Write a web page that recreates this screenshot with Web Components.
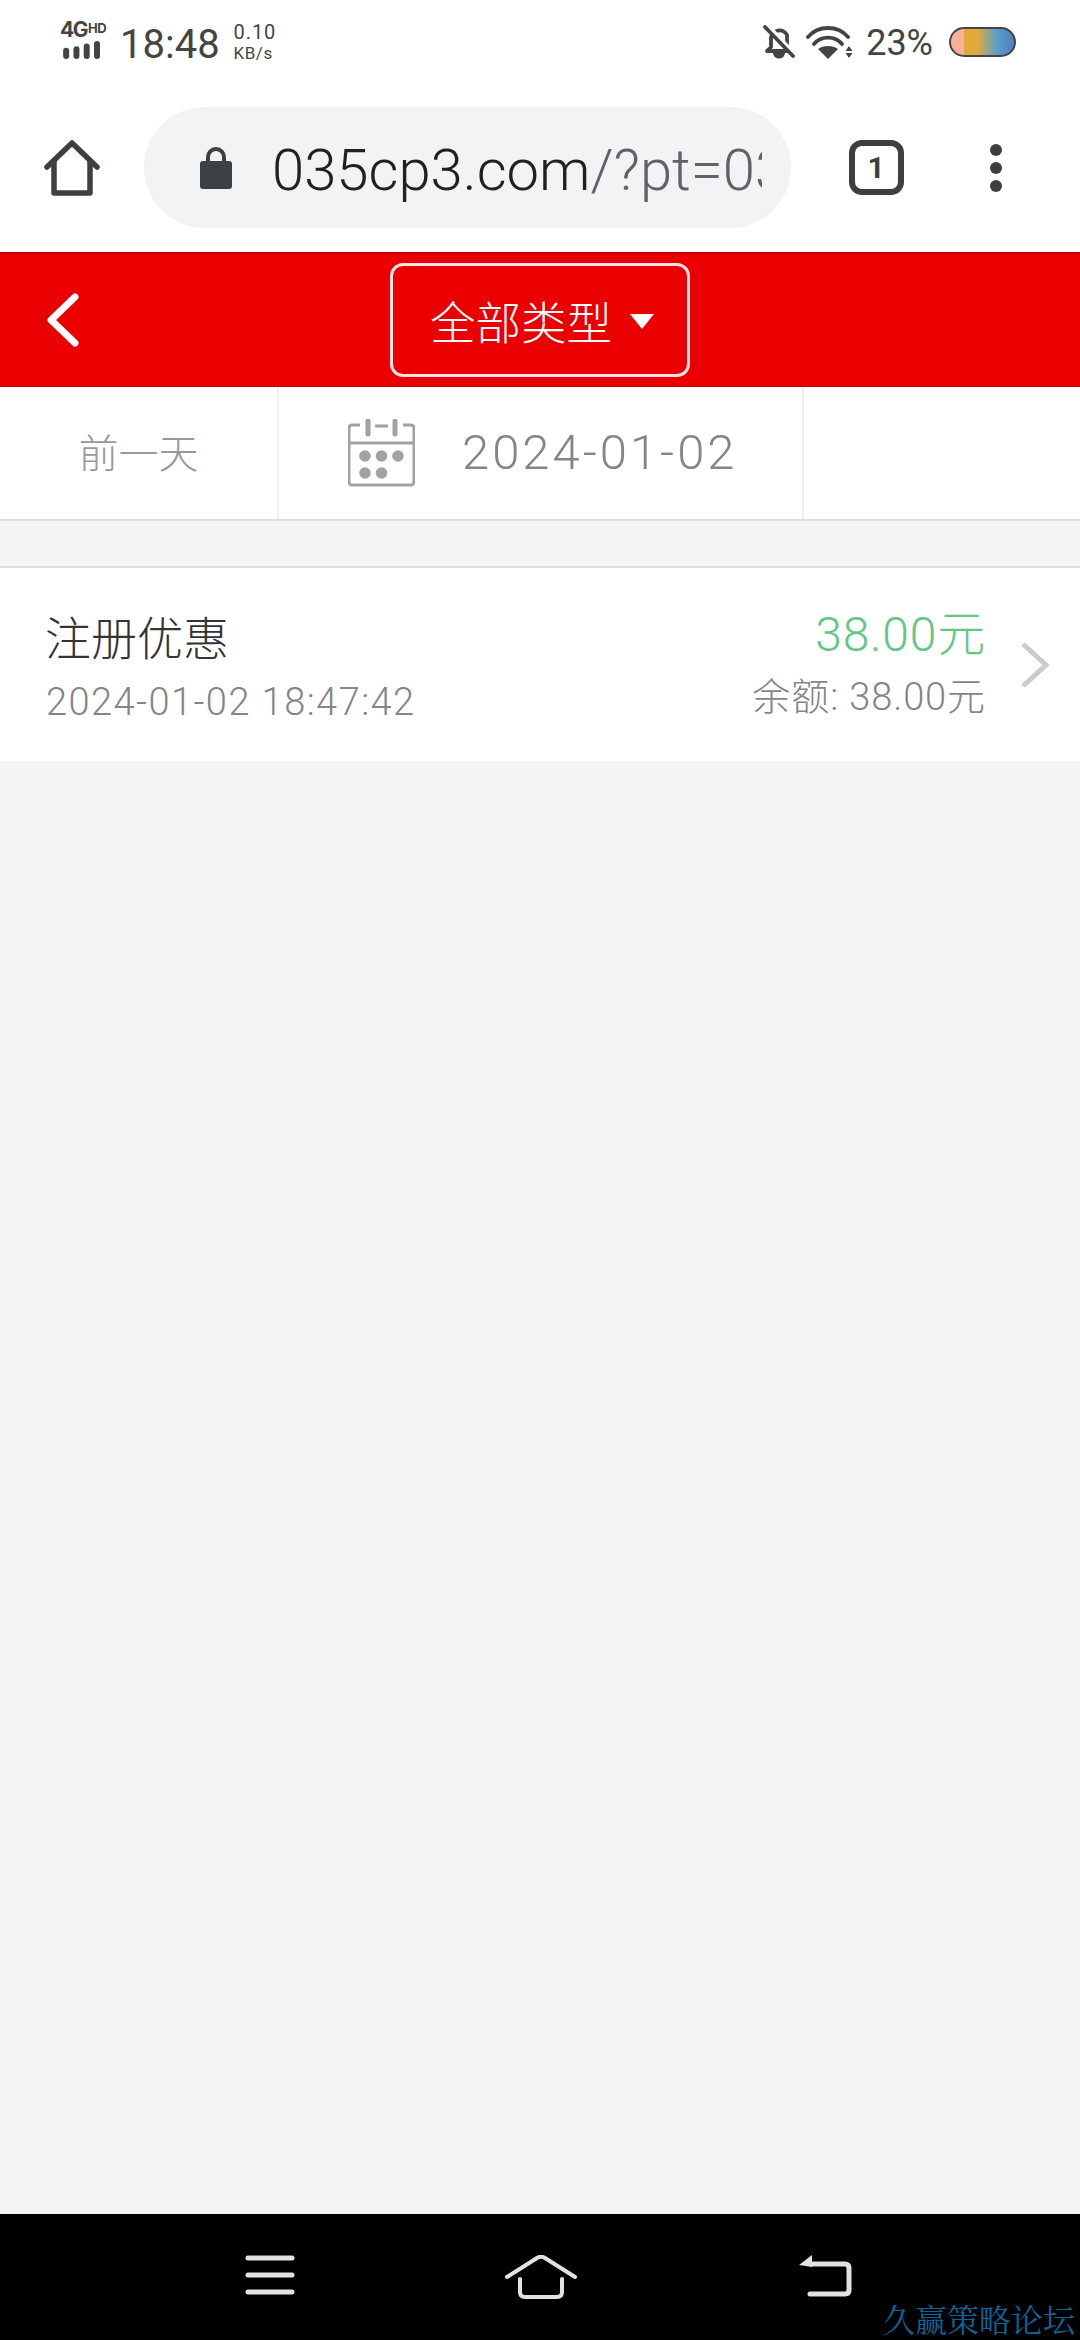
<!DOCTYPE html>
<html lang="zh">
<head>
<meta charset="utf-8">
<title>账变记录</title>
<style>
  html, body { margin: 0; height: 100%; }
  body { font-family: Roboto, "Noto Sans CJK SC", sans-serif; background: #f4f4f5; }
  app-page { height: 2340px; }
</style>
</head>
<body>
<app-page>
  <status-bar></status-bar>
  <browser-toolbar></browser-toolbar>
  <red-header>全部类型</red-header>
  <date-bar date="2024-01-02">前一天</date-bar>
  <record-item title="注册优惠" time="2024-01-02 18:47:42" amount="38.00元" balance="余额: 38.00元"></record-item>
  <nav-bar></nav-bar>
</app-page>

<script>
class AppPage extends HTMLElement {
  constructor() {
    super();
    this.attachShadow({ mode: 'open' }).innerHTML = `
      <style>
        :host { display: flex; flex-direction: column; background: #f4f4f5; }
        .content { display: contents; }
      </style>
      <div class="content"><slot></slot></div>
    `;
  }
}

class StatusBar extends HTMLElement {
  constructor() {
    super();
    this.attachShadow({ mode: 'open' }).innerHTML = `
      <style>
        :host { display: flex; height: 88px; background: #fff; color: #444; padding: 0 64px 0 60px; justify-content: space-between; align-items: flex-start; box-sizing: border-box; }
        .left, .right { display: flex; align-items: center; height: 84px; }
        .net { width: 44px; height: 38px; margin-top: -4px; display: flex; flex-direction: column; }
        .net b { font: 700 21px/17px Inter, sans-serif; letter-spacing: -1.5px; white-space: nowrap; }
        .net b i { font: 700 13px/13px Inter, sans-serif; font-style: normal; letter-spacing: -0.5px; vertical-align: 4px; margin-left: 1px; }
        .net svg { display: block; margin-top: 3px; }
        .time { font: 400 40px/44px Roboto, sans-serif; margin: 5px 0 0 16px; color: #444; }
        .speed { margin: 2px 0 0 14px; font: 400 20px/21px Roboto, sans-serif; letter-spacing: 0.9px; display: flex; flex-direction: column; }
        .speed span + span { font-size: 17px; letter-spacing: 0.5px; }
        .bell { margin-right: 11px; display: block; }
        .wifi { margin-right: 12px; display: block; }
        .pct { font: 400 36px/40px Roboto, sans-serif; margin-right: 16px; margin-top: 2px; }
        .batt { width: 67px; height: 30px; box-sizing: border-box; border: 2.5px solid #444; border-radius: 15px; background: linear-gradient(90deg, #f9b29a 0 20%, #e4a93c 20% 42%, #5a9fcb 72%, #4d7fc0 100%); }
      </style>
      <div class="left">
        <div class="net">
          <b>4G<i>HD</i></b>
          <svg width="44" height="21" viewBox="0 0 44 21" fill="#444">
            <rect x="0" y="8" width="7" height="13" rx="3.500"/>
            <rect x="12" y="6" width="7" height="15" rx="3.500"/>
            <rect x="24" y="3" width="7" height="18" rx="3.500"/>
            <rect x="36" y="0" width="7" height="21" rx="3.500"/>
          </svg>
        </div>
        <span class="time">18:48</span>
        <div class="speed"><span>0.10</span><span>KB/s</span></div>
      </div>
      <div class="right">
        <svg class="bell" width="32" height="34" viewBox="0 0 32 34">
          <path d="M4 26 l4-4 v-9 a8.500 8.500 0 0 1 16 -3 v12 l4 4 z" fill="none" stroke="#444" stroke-width="3.800" stroke-linejoin="round"/>
          <path d="M10 28 a6 5.500 0 0 0 12 0 z" fill="#444"/>
          <path d="M4 1 L31 30" stroke="#fff" stroke-width="6"/>
          <path d="M2 2 L30 31" stroke="#444" stroke-width="3.800" stroke-linecap="round"/>
        </svg>
        <svg class="wifi" width="48" height="34" viewBox="0 0 48 34" fill="none" stroke="#444" stroke-width="3.800" stroke-linecap="round">
          <path d="M2 12 C12 0 32 0 42 12"/>
          <path d="M8 19 C15 10.500 29 10.500 36 19"/>
          <path d="M22 34 L12 24 C17 20 27 20 32 24 Z" fill="#444" stroke="none"/>
          <path d="M43 21 l3.500 5 h-7 z M43 33 l-3.500 -5 h7 z" fill="#444" stroke="none"/>
        </svg>
        <span class="pct">23%</span>
        <div class="batt"></div>
      </div>
    `;
  }
}

class BrowserToolbar extends HTMLElement {
  constructor() {
    super();
    this.attachShadow({ mode: 'open' }).innerHTML = `
      <style>
        :host { display: grid; grid-template-columns: 144px 647px 170px 1fr; height: 164px; background: #fff; box-sizing: border-box; padding-top: 19px; }
        .cell { height: 121px; display: flex; align-items: center; justify-content: center; }
        .pill { justify-content: flex-start; background: #f1f3f4; border-radius: 61px; padding-left: 56px; box-sizing: border-box; }
        .url { margin: 4px 0 0 40px; width: 490px; overflow: hidden; white-space: nowrap; font: 300 58px/70px Roboto, sans-serif; color: #202124; }
        .url span { color: #5f6368; }
        .tab-box { width: 55px; height: 55px; box-sizing: border-box; border: 6px solid #3c4043; border-radius: 13px; display: flex; align-items: center; justify-content: center; font: 700 30px/1 Roboto, sans-serif; color: #3c4043; }
        .dots { padding-right: 49px; }
      </style>
      <div class="cell">
        <svg width="56" height="56" viewBox="0 0 56 56" fill="none" stroke="#3c4043" stroke-width="5.500" stroke-linejoin="round" stroke-linecap="round">
          <path d="M3 27 L28 3 L53 27"/>
          <path d="M10 21 V53 H46 V21"/>
        </svg>
      </div>
      <div class="cell pill">
        <svg width="32" height="43" viewBox="0 0 32 43" fill="#3c4043">
          <path d="M0 18 a3 3 0 0 1 3-3 h26 a3 3 0 0 1 3 3 v22 a3 3 0 0 1 -3 3 h-26 a3 3 0 0 1 -3-3 z"/>
          <path d="M8 16 v-5 a8 8 0 0 1 16 0 v5" fill="none" stroke="#3c4043" stroke-width="4"/>
        </svg>
        <div class="url">035cp3.com<span>/?pt=03</span></div>
      </div>
      <div class="cell"><div class="tab-box">1</div></div>
      <div class="cell dots">
        <svg width="12" height="48" viewBox="0 0 12 48" fill="#3c4043">
          <circle cx="6" cy="6" r="6"/><circle cx="6" cy="24" r="6"/><circle cx="6" cy="42" r="6"/>
        </svg>
      </div>
    `;
  }
}

class RedHeader extends HTMLElement {
  constructor() {
    super();
    this.attachShadow({ mode: 'open' }).innerHTML = `
      <style>
        :host { display: grid; grid-template-columns: 1fr auto 1fr; align-items: center; height: 135px; box-sizing: border-box; background: #ea0000; border-top: 2px solid #c70000; border-bottom: 1px solid #c70000; color: #fff; }
        .back { padding-left: 46px; display: flex; }
        .select { width: 300px; height: 114px; box-sizing: border-box; border: 3px solid #fbe3e3; border-radius: 13px; display: flex; align-items: center; padding-left: 37px; font: 300 45.5px/60px "Noto Sans CJK SC", sans-serif; gap: 18px; }
        .arrow { width: 0; height: 0; border-left: 12px solid transparent; border-right: 12px solid transparent; border-top: 15px solid #fff; margin-top: 2px; }
      </style>
      <div class="back">
        <svg width="34" height="54" viewBox="0 0 34 54" fill="none" stroke="#fff" stroke-width="7" stroke-linecap="round" stroke-linejoin="round">
          <path d="M29 4 L5 27 L29 50"/>
        </svg>
      </div>
      <div class="select"><slot></slot><span class="arrow"></span></div>
      <div></div>
    `;
  }
}

class DateBar extends HTMLElement {
  constructor() {
    super();
    this.attachShadow({ mode: 'open' }).innerHTML = `
      <style>
        :host { display: grid; grid-template-columns: 277px 525px 1fr; height: 134px; box-sizing: border-box; background: #fff; border-bottom: 2px solid #dcdcdc; }
        .cell { display: flex; align-items: center; box-sizing: border-box; }
        .cell + .cell { border-left: 2px solid #f0f0f0; }
        .prev { justify-content: center; font: 300 40px/50px "Noto Sans CJK SC", sans-serif; color: #999; padding-bottom: 4px; }
        .mid { padding-left: 69px; }
        .date { margin-left: 47px; font: 300 49px/60px Roboto, sans-serif; letter-spacing: 3px; color: #858585; }
      </style>
      <div class="cell prev"><slot></slot></div>
      <div class="cell mid">
        <svg width="67" height="68" viewBox="0 0 67 68" fill="none" stroke="#a2a2a2">
          <path d="M12 6 H4 a3 3 0 0 0 -3 3 V63 a3 3 0 0 0 3 3 H63 a3 3 0 0 0 3-3 V9 a3 3 0 0 0 -3-3 H55 M27 7 H40" stroke-width="3"/>
          <path d="M1 24 H66" stroke-width="3"/>
          <path d="M20 2 V15 M47 2 V15" stroke-width="5" stroke-linecap="round"/>
          <g fill="#a2a2a2" stroke="none">
            <circle cx="17" cy="37" r="5.800"/><circle cx="33.500" cy="37" r="5.800"/><circle cx="50" cy="37" r="5.800"/>
            <circle cx="17" cy="54" r="5.800"/><circle cx="33.500" cy="54" r="5.800"/>
          </g>
        </svg>
        <span class="date"></span>
      </div>
      <div class="cell"></div>
    `;
  }
  connectedCallback() {
    this.shadowRoot.querySelector('.date').textContent = this.getAttribute('date') || '';
  }
}

class RecordItem extends HTMLElement {
  constructor() {
    super();
    this.attachShadow({ mode: 'open' }).innerHTML = `
      <style>
        :host { display: flex; align-items: center; height: 195px; margin-top: 45px; box-sizing: border-box; background: #fff; border-top: 2px solid #dcdcdc; padding: 0 29px 0 45px; }
        .info { flex: 1; display: flex; flex-direction: column; gap: 14px; margin-top: 2px; }
        .title { font: 300 46px/58px "Noto Sans CJK SC", sans-serif; color: #333; }
        .time { font: 300 38px/48px Roboto, sans-serif; letter-spacing: 1.45px; color: #858585; padding-left: 1px; }
        .money { display: flex; flex-direction: column; align-items: flex-end; gap: 8px; margin-right: 33px; margin-top: -4px; }
        .amount { font: 300 48px/60px Roboto, "Noto Sans CJK SC", sans-serif; letter-spacing: 0.8px; color: #5fc883; }
        .balance { font: 300 38px/48px Roboto, "Noto Sans CJK SC", sans-serif; letter-spacing: 0.9px; color: #858585; }
        svg { display: block; }
      </style>
      <div class="info"><div class="title"></div><div class="time"></div></div>
      <div class="money"><div class="amount"></div><div class="balance"></div></div>
      <svg width="32" height="46" viewBox="0 0 32 46" fill="none" stroke="#cbcbcb" stroke-width="5"><path d="M4 2 L27 23 L4 44"/></svg>
    `;
  }
  connectedCallback() {
    ['title', 'time', 'amount', 'balance'].forEach(k => {
      this.shadowRoot.querySelector('.' + k).textContent = this.getAttribute(k) || '';
    });
    this.removeAttribute('title');
  }
}

class NavBar extends HTMLElement {
  constructor() {
    super();
    this.attachShadow({ mode: 'open' }).innerHTML = `
      <style>
        :host { display: flex; position: relative; margin-top: auto; height: 126px; background: #000; padding: 41px 0 0 245px; box-sizing: border-box; align-items: flex-start; }
        svg { display: block; }
        .home { margin-left: 210px; }
        .back { margin-left: 221px; }
        .mark { position: absolute; right: 5px; bottom: 4px; font: 400 32px/36px "Noto Serif CJK SC", "Noto Sans CJK SC", serif; color: #0e6496; white-space: nowrap; }
      </style>
      <svg width="50" height="40" viewBox="0 0 50 40" fill="none" stroke="#e2e2e2" stroke-width="5" stroke-linecap="round">
        <path d="M3 3 H47 M3 20 H47 M3 37 H47"/>
      </svg>
      <svg class="home" width="72" height="44" viewBox="0 0 72 44" fill="none" stroke="#e2e2e2" stroke-width="4" stroke-linecap="round" stroke-linejoin="round">
        <path d="M2 22 L32 3 Q36 0.500 40 3 L70 22"/>
        <path d="M15 24 V37 Q15 42 20 42 H52 Q57 42 57 37 V24"/>
      </svg>
      <svg class="back" width="54" height="42" viewBox="0 0 54 42" fill="none" stroke="#e2e2e2" stroke-width="5" stroke-linecap="round" stroke-linejoin="round">
        <path d="M14 9 H47 Q51 9 51 13 V35 Q51 39 47 39 H12"/>
        <path d="M1 10 L14 0 V12 Z" fill="#e2e2e2" stroke="none"/>
      </svg>
      <span class="mark">久赢策略论坛</span>
    `;
  }
}

customElements.define('app-page', AppPage);
customElements.define('status-bar', StatusBar);
customElements.define('browser-toolbar', BrowserToolbar);
customElements.define('red-header', RedHeader);
customElements.define('date-bar', DateBar);
customElements.define('record-item', RecordItem);
customElements.define('nav-bar', NavBar);
</script>
</body>
</html>
